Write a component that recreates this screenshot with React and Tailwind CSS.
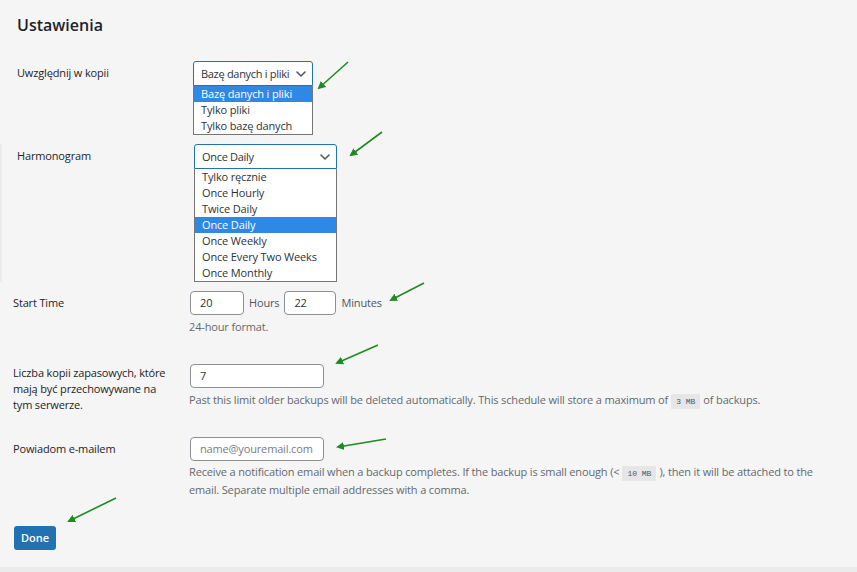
import React from 'react';

const Chevron = () => (
  <svg width="10" height="6" viewBox="0 0 10 6" fill="none" className="shrink-0">
    <path d="M1 1l4 4 4-4" stroke="#50575e" strokeWidth="1.6" strokeLinecap="round" strokeLinejoin="round" />
  </svg>
);

const OpenSelect = ({ value, options, selected, width }) => (
  <div className={`${width} shrink-0 whitespace-nowrap`}>
    <div className="h-[25px] flex items-center justify-between pl-[7px] pr-[6px] bg-white border border-[#2271b1] rounded-t-[3px] text-[#2c3338]">
      <span className="tracking-[-0.3px]">{value}</span>
      <Chevron />
    </div>
    <ul className="bg-white border border-[#767676] border-t-0">
      {options.map((o) => (
        <li
          key={o}
          className={
            o === selected
              ? 'h-4 leading-4 pl-[7px] bg-[#2e88e4] text-white'
              : 'h-4 leading-4 pl-[7px] text-[#2c3338]'
          }
        >
          {o}
        </li>
      ))}
    </ul>
  </div>
);

const TextBox = ({ value, placeholder, width }) => (
  <div
    className={`${width} shrink-0 h-6 flex items-center pl-[9px] bg-white border border-[#8c8f94] rounded-[4px] ${
      value ? 'text-[#2c3338]' : 'text-[#787c82]'
    }`}
  >
    {value || placeholder}
  </div>
);

const Code = ({ children }) => (
  <code className="inline-block mx-[3px] px-[5px] bg-[#e6e6e6] text-[8px] leading-[15px] tracking-normal text-[#50575e] font-['Liberation_Mono',monospace]">
    {children}
  </code>
);

// green annotation arrows drawn over the form
const arrows = [
  [348, 62, 319, 88],
  [382, 132, 351, 155],
  [424, 283, 391, 300],
  [378, 345, 337, 363],
  [386, 439, 338, 447],
  [116, 498, 69, 521],
];

const Arrows = () => (
  <svg className="absolute inset-0 pointer-events-none" width="857" height="572">
    <defs>
      <marker id="head" markerWidth="8" markerHeight="8" refX="6" refY="4" orient="auto" markerUnits="userSpaceOnUse">
        <path d="M0 0 L8 4 L0 8 Z" fill="#1f8c22" />
      </marker>
    </defs>
    {arrows.map(([x1, y1, x2, y2], i) => (
      <line key={i} x1={x1} y1={y1} x2={x2} y2={y2} stroke="#1f8c22" strokeWidth="1.6" markerEnd="url(#head)" />
    ))}
  </svg>
);

export default function App() {
  return (
    <div className="relative w-[857px] h-[572px] overflow-hidden bg-[#f5f5f5] flex flex-col font-['Open_Sans',sans-serif] text-[11px] tracking-[-0.15px] leading-4 text-[#1d2327]">
      <h2 className="pl-[17px] pt-[13px] text-[16px] leading-6 font-semibold tracking-normal">Ustawienia</h2>

      {/* Uwzględnij w kopii */}
      <div className="flex pl-[17px] mt-6">
        <div className="w-[176px] shrink-0 pt-[4px]">Uwzględnij w kopii</div>
        <OpenSelect
          width="w-[120px]"
          value="Bazę danych i pliki"
          selected="Bazę danych i pliki"
          options={['Bazę danych i pliki', 'Tylko pliki', 'Tylko bazę danych']}
        />
      </div>

      {/* Harmonogram */}
      <div className="flex pl-[15px] mt-[9px] border-l-2 border-[#ebebeb]">
        <div className="w-[177px] shrink-0 pt-[4px]">Harmonogram</div>
        <OpenSelect
          width="w-[143px]"
          value="Once Daily"
          selected="Once Daily"
          options={[
            'Tylko ręcznie',
            'Once Hourly',
            'Twice Daily',
            'Once Daily',
            'Once Weekly',
            'Once Every Two Weeks',
            'Once Monthly',
          ]}
        />
      </div>

      {/* Start Time */}
      <div className="flex pl-[13px] mt-[9px]">
        <div className="w-[177px] shrink-0 pt-[4px]">Start Time</div>
        <div>
          <div className="flex items-center text-[#50575e]">
            <TextBox width="w-[54px]" value="20" />
            <span className="mx-[5px]">Hours</span>
            <TextBox width="w-[52px]" value="22" />
            <span className="ml-[5px]">Minutes</span>
          </div>
          <p className="mt-1 -ml-px text-[#646970]">24-hour format.</p>
        </div>
      </div>

      {/* Liczba kopii */}
      <div className="flex pl-[13px] mt-[29px]">
        <div className="w-[177px] shrink-0 pt-[1px]">
          Liczba kopii zapasowych, które
          <br />
          mają być przechowywane na
          <br />
          tym serwerze.
        </div>
        <div>
          <TextBox width="w-[134px]" value="7" />
          <p className="mt-1 -ml-px text-[#646970]">
            Past this limit older backups will be deleted automatically. This schedule will store a maximum of
            <Code>3 MB</Code>
            of backups.
          </p>
        </div>
      </div>

      {/* Powiadom e-mailem */}
      <div className="flex pl-[13px] mt-[24px]">
        <div className="w-[177px] shrink-0 pt-[4px]">Powiadom e-mailem</div>
        <div>
          <TextBox width="w-[134px]" placeholder="name@youremail.com" />
          <p className="mt-[2px] -ml-px leading-[18px] text-[#646970] whitespace-nowrap">
            Receive a notification email when a backup completes. If the backup is small enough (&lt;
            <Code>10 MB</Code>
            ), then it will be attached to the
            <br />
            email. Separate multiple email addresses with a comma.
          </p>
        </div>
      </div>

      <div className="pl-[14px] mt-[27px]">
        <button className="h-6 w-[42px] bg-[#2271b1] text-white text-[11px] tracking-normal font-semibold rounded-[3px]">
          Done
        </button>
      </div>

      <div className="mt-auto h-[5px] bg-[#ebebeb]" />

      <Arrows />
    </div>
  );
}
